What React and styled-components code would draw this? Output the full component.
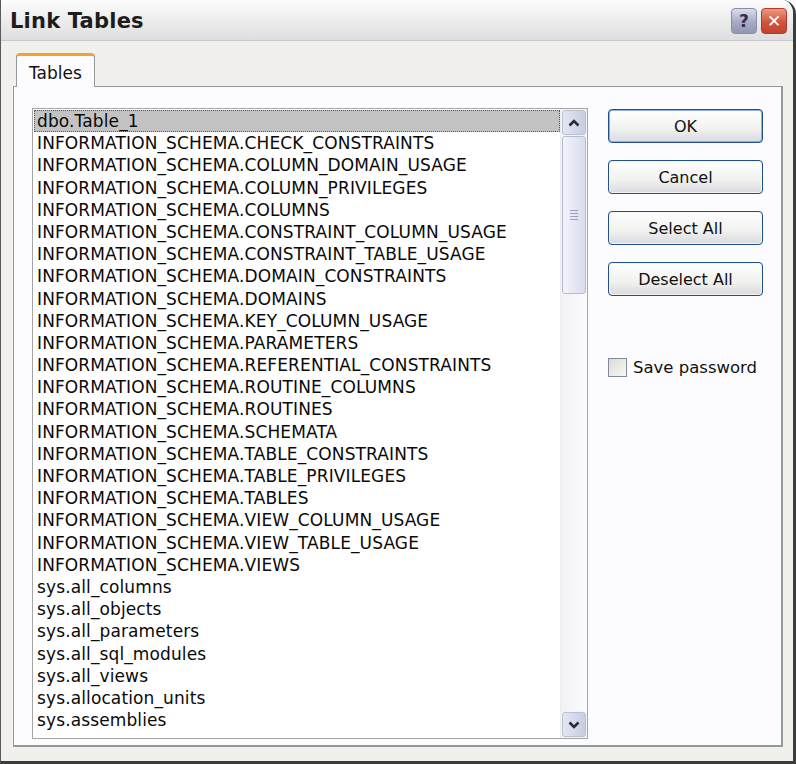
import React from "react";
import styled, { createGlobalStyle } from "styled-components";

const GlobalStyle = createGlobalStyle`
  html, body {
    margin: 0;
    padding: 0;
    background: #ffffff;
  }
  body {
    font-family: "DejaVu Sans", sans-serif;
  }
`;

const Window = styled.div`
  width: 796px;
  height: 764px;
  box-sizing: border-box;
  display: flex;
  flex-direction: column;
  background: #f1f0ec;
  border: 1px solid #5a5a5a;
  border-top: none;
  border-right: 3px solid #3c3c3c;
  border-bottom: 3px solid #3c3c3c;
  border-radius: 0 14px 0 0;
  overflow: hidden;
`;

const TitleBar = styled.div`
  height: 40px;
  flex: none;
  display: flex;
  align-items: center;
  justify-content: space-between;
  padding: 0 6px 0 9px;
  background: linear-gradient(#fdfdfd, #f0f0f0 40%, #dedee0);
  border-bottom: 1px solid #c9c9cc;
`;

const Title = styled.div`
  font-family: "DejaVu Sans", sans-serif;
  font-weight: bold;
  font-size: 21px;
  color: #1c1c1c;
  letter-spacing: 0.2px;
  padding-top: 2px;
`;

const Controls = styled.div`
  display: flex;
  gap: 4px;
  padding-top: 2px;
`;

const CtlButton = styled.div`
  width: 26px;
  height: 26px;
  border-radius: 4px;
  box-sizing: border-box;
  display: flex;
  align-items: center;
  justify-content: center;
  font-family: "DejaVu Sans", sans-serif;
  font-weight: bold;
  font-size: 17px;
  border: 1px solid ${(p) => (p.$close ? "#b03a2a" : "#8a8ca8")};
  background: ${(p) =>
    p.$close
      ? "linear-gradient(#e99a88, #d4533b 55%, #c24430)"
      : "linear-gradient(#dcdde8, #a8aac4 55%, #9497b5)"};
  color: ${(p) => (p.$close ? "#ffffff" : "#2e3050")};
`;

const Body = styled.div`
  flex: 1;
  display: flex;
  flex-direction: column;
  padding: 12px 10px 15px 12px;
`;

const TabStrip = styled.div`
  display: flex;
  padding-left: 3px;
  height: 33px;
  position: relative;
  z-index: 1;
`;

const Tab = styled.div`
  width: 79px;
  box-sizing: border-box;
  padding-top: 7px;
  padding-left: 12px;
  font-size: 17px;
  color: #111;
  background: #fcfcfe;
  border: 1px solid #919b9c;
  border-bottom: none;
  border-top: 3px solid #f2a629;
  border-radius: 4px 4px 0 0;
  height: 34px;
`;

const Panel = styled.div`
  flex: 1;
  display: flex;
  gap: 20px;
  padding: 21px 18px 6px 18px;
  background: #fcfcfe;
  border: 1px solid #919b9c;
  border-right: 2px solid #919b9c;
  border-bottom: 2px solid #919b9c;
`;

const ListBox = styled.div`
  width: 557px;
  height: 631px;
  box-sizing: border-box;
  display: flex;
  background: #fff;
  border: 1px solid #a5a5a5;
`;

const Items = styled.div`
  flex: 1;
  padding: 1px 0 0 1px;
  overflow: hidden;
`;

const Item = styled.div`
  height: 22.2px;
  line-height: 22px;
  padding-left: 3px;
  font-size: 17px;
  letter-spacing: 0.12px;
  color: #0a0a0a;
  white-space: nowrap;
  box-sizing: border-box;
  background: ${(p) => (p.$selected ? "#c3c3c3" : "transparent")};
  outline: ${(p) => (p.$selected ? "1px dotted #555" : "none")};
  outline-offset: -1px;
`;

const ScrollBar = styled.div`
  width: 26px;
  flex: none;
  display: flex;
  flex-direction: column;
  background: #f4f4f9;
  border-left: 1px solid #eeeef2;
`;

const ScrollArrow = styled.div`
  height: 25px;
  margin: 1px;
  box-sizing: border-box;
  border: 1px solid #b9c0d0;
  border-radius: 3px;
  background: linear-gradient(90deg, #e4e6f4, #c8cce4);
  display: flex;
  align-items: center;
  justify-content: center;
`;

const Track = styled.div`
  flex: 1;
  display: flex;
  flex-direction: column;
  background: linear-gradient(90deg, #f2f2f6, #fcfcfe);
`;

const Thumb = styled.div`
  height: 158px;
  margin: 0 1px;
  box-sizing: border-box;
  border: 1px solid #b5bcd2;
  border-radius: 3px;
  background: linear-gradient(90deg, #f2f3fb, #dadcee);
  display: flex;
  flex-direction: column;
  align-items: center;
  justify-content: center;
  gap: 2px;
`;

const Grip = styled.div`
  width: 8px;
  height: 1px;
  background: #9aa0b8;
`;

const Side = styled.div`
  display: flex;
  flex-direction: column;
  padding-top: 1px;
`;

const Buttons = styled.div`
  display: flex;
  flex-direction: column;
  gap: 17px;
`;

const Button = styled.div`
  width: 155px;
  height: 34px;
  box-sizing: border-box;
  border: 1px solid #1f4f8c;
  border-radius: 4px;
  display: flex;
  align-items: center;
  justify-content: center;
  font-size: 16px;
  color: #111;
  background: linear-gradient(#ffffff, #f1f1ee 60%, #d9d9e2);
  box-shadow: inset 0 0 0 1px ${(p) => (p.$default ? "#8ab0e6" : "#f4f4f4")};
`;

const CheckRow = styled.label`
  display: flex;
  align-items: center;
  gap: 6px;
  margin-top: 62px;
  font-size: 16.5px;
  color: #111;
`;

const CheckBox = styled.span`
  width: 19px;
  height: 19px;
  box-sizing: border-box;
  border: 1px solid #7d8b9c;
  background: linear-gradient(135deg, #dcdcd6, #f8f8f6);
`;

const items = [
  "dbo.Table_1",
  "INFORMATION_SCHEMA.CHECK_CONSTRAINTS",
  "INFORMATION_SCHEMA.COLUMN_DOMAIN_USAGE",
  "INFORMATION_SCHEMA.COLUMN_PRIVILEGES",
  "INFORMATION_SCHEMA.COLUMNS",
  "INFORMATION_SCHEMA.CONSTRAINT_COLUMN_USAGE",
  "INFORMATION_SCHEMA.CONSTRAINT_TABLE_USAGE",
  "INFORMATION_SCHEMA.DOMAIN_CONSTRAINTS",
  "INFORMATION_SCHEMA.DOMAINS",
  "INFORMATION_SCHEMA.KEY_COLUMN_USAGE",
  "INFORMATION_SCHEMA.PARAMETERS",
  "INFORMATION_SCHEMA.REFERENTIAL_CONSTRAINTS",
  "INFORMATION_SCHEMA.ROUTINE_COLUMNS",
  "INFORMATION_SCHEMA.ROUTINES",
  "INFORMATION_SCHEMA.SCHEMATA",
  "INFORMATION_SCHEMA.TABLE_CONSTRAINTS",
  "INFORMATION_SCHEMA.TABLE_PRIVILEGES",
  "INFORMATION_SCHEMA.TABLES",
  "INFORMATION_SCHEMA.VIEW_COLUMN_USAGE",
  "INFORMATION_SCHEMA.VIEW_TABLE_USAGE",
  "INFORMATION_SCHEMA.VIEWS",
  "sys.all_columns",
  "sys.all_objects",
  "sys.all_parameters",
  "sys.all_sql_modules",
  "sys.all_views",
  "sys.allocation_units",
  "sys.assemblies",
];

const Chevron = ({ up }) => (
  <svg width="12" height="8" viewBox="0 0 12 8">
    <path
      d={up ? "M1.5 6.5 L6 2 L10.5 6.5" : "M1.5 1.5 L6 6 L10.5 1.5"}
      fill="none"
      stroke="#2b2b2b"
      strokeWidth="2.6"
    />
  </svg>
);

export default function App() {
  return (
    <>
      <GlobalStyle />
      <Window>
        <TitleBar>
          <Title>Link Tables</Title>
          <Controls>
            <CtlButton>?</CtlButton>
            <CtlButton $close>✕</CtlButton>
          </Controls>
        </TitleBar>
        <Body>
          <TabStrip>
            <Tab>Tables</Tab>
          </TabStrip>
          <Panel>
            <ListBox>
              <Items>
                {items.map((name, i) => (
                  <Item key={name} $selected={i === 0}>
                    {name}
                  </Item>
                ))}
              </Items>
              <ScrollBar>
                <ScrollArrow>
                  <Chevron up />
                </ScrollArrow>
                <Track>
                  <Thumb>
                    <Grip />
                    <Grip />
                    <Grip />
                    <Grip />
                  </Thumb>
                </Track>
                <ScrollArrow>
                  <Chevron />
                </ScrollArrow>
              </ScrollBar>
            </ListBox>
            <Side>
              <Buttons>
                <Button $default>OK</Button>
                <Button>Cancel</Button>
                <Button>Select All</Button>
                <Button>Deselect All</Button>
              </Buttons>
              <CheckRow>
                <CheckBox />
                Save password
              </CheckRow>
            </Side>
          </Panel>
        </Body>
      </Window>
    </>
  );
}
